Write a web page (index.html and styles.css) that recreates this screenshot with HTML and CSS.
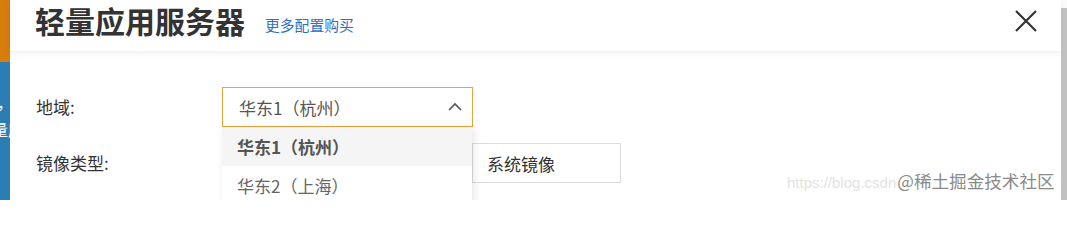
FILE: index.html
```html
<!DOCTYPE html>
<html lang="zh-CN">
<head>
<meta charset="utf-8">
<link rel="stylesheet" href="styles.css">
</head>
<body>
<div class="page">
  <div class="side">
    <div class="side-top"></div>
    <div class="side-bottom">
      <span class="side-t1">，</span>
      <span class="side-t2">量应</span>
    </div>
  </div>
  <div class="dialog">
    <div class="header">
      <h1 class="title">轻量应用服务器</h1>
      <a class="more">更多配置购买</a>
      <span class="close">
        <svg width="22" height="22" viewBox="0 0 22 22"><path d="M1 1L21 21M21 1L1 21" stroke="#333" stroke-width="2.2" fill="none"/></svg>
      </span>
    </div>
    <div class="body">
      <div class="row">
        <div class="label">地域:</div>
        <div class="select-wrap">
          <div class="select">
            <span>华东1（杭州）</span>
            <svg class="arrow" width="14" height="9" viewBox="0 0 14 9"><path d="M1 8L7 2L13 8" stroke="#555" stroke-width="1.6" fill="none"/></svg>
          </div>
          <ul class="dropdown">
            <li class="opt active">华东1（杭州）</li>
            <li class="opt">华东2（上海）</li>
          </ul>
        </div>
      </div>
      <div class="row">
        <div class="label">镜像类型:</div>
        <div class="btn-group">
          <span class="rbtn first"></span>
          <span class="rbtn">系统镜像</span>
        </div>
      </div>
    </div>
    <div class="watermark"><span class="wm-url">https://blog.csdn</span><span class="wm-name">@稀土掘金技术社区</span></div>
  </div>
  <div class="scrollbar"><div class="thumb"></div></div>
</div>
</body>
</html>
```
FILE: styles.css
```css
* { box-sizing: border-box; }
html, body { margin: 0; padding: 0; }
body {
  width: 1067px;
  height: 200px;
  overflow: hidden;
  background: #fff;
  font-family: "Noto Sans CJK SC", "Noto Sans", sans-serif;
}
.page {
  display: flex;
  height: 200px;
}
.side {
  width: 10px;
  display: flex;
  flex-direction: column;
  overflow: hidden;
}
.side-top {
  height: 62px;
  background: #d87c0b;
}
.side-bottom {
  flex: 1;
  background: #2b7db4;
  color: #fff;
  font-size: 16px;
  display: flex;
  flex-direction: column;
  padding-top: 27px;
  line-height: 27px;
}
.side-t1 { margin-left: -3px; }
.side-t2 { margin-left: -8px; white-space: nowrap; }
.dialog {
  flex: 1;
  position: relative;
  background: #fff;
  display: flex;
  flex-direction: column;
}
.header {
  height: 52px;
  display: flex;
  align-items: flex-start;
  padding: 0 24px 0 25px;
  box-shadow: 0 2px 5px rgba(0, 0, 0, 0.05);
  border-bottom: 1px solid #f4f4f4;
  position: relative;
  z-index: 1;
}
.title {
  margin: 0;
  font-size: 30px;
  font-weight: 700;
  line-height: 40px;
  color: #333;
}
.more {
  margin: 15px 0 0 20px;
  font-size: 14.8px;
  line-height: 20px;
  color: #2e6fc2;
  text-decoration: none;
}
.close {
  margin-left: auto;
  margin-top: 10px;
  width: 22px;
  height: 22px;
  display: flex;
}
.body {
  padding: 35px 0 0 26px;
  display: flex;
  flex-direction: column;
  gap: 16px;
}
.row {
  display: flex;
  align-items: center;
  height: 40px;
}
.label {
  width: 186px;
  font-size: 17px;
  color: #333;
  position: relative;
  top: -1px;
}
.select-wrap {
  position: relative;
  width: 251px;
}
.select {
  height: 40px;
  border: 1px solid #e6a23c;
  display: flex;
  align-items: center;
  justify-content: space-between;
  padding: 0 10px 0 16px;
  font-size: 17px;
  color: #555;
  background: #fff;
}
.arrow { margin-top: -2px; }
.dropdown {
  position: absolute;
  top: 40px;
  left: 0;
  width: 250px;
  margin: 0;
  padding: 0;
  list-style: none;
  background: #fff;
  box-shadow: 2px 2px 8px rgba(0, 0, 0, 0.10);
  z-index: 5;
}
.opt {
  height: 39px;
  line-height: 39px;
  padding-left: 15px;
  font-size: 17px;
  color: #666;
}
.opt.active {
  background: #f5f5f5;
  font-weight: 700;
  color: #555;
}
.btn-group {
  display: flex;
  height: 40px;
}
.rbtn {
  display: flex;
  align-items: center;
  height: 40px;
  width: 149px;
  padding-left: 14px;
  border: 1px solid #dcdcdc;
  font-size: 17px;
  color: #333;
  background: #fff;
}
.rbtn.first {
  width: 250px;
  border-right: none;
}
.watermark {
  position: absolute;
  left: 777px;
  top: 168px;
  display: flex;
  align-items: baseline;
  white-space: nowrap;
  z-index: 10;
}
.wm-url {
  font-family: "Liberation Sans", sans-serif;
  font-size: 15px;
  color: #e2e2e2;
}
.wm-name {
  font-size: 17.6px;
  color: #8a8a8a;
  margin-left: 1px;
  text-shadow: 0 0 1px #fff;
}
.scrollbar {
  width: 6px;
  background: #fafafa;
  padding-top: 8px;
  display: flex;
}
.thumb {
  flex: 1;
  background: #c1c1c1;
}
```
